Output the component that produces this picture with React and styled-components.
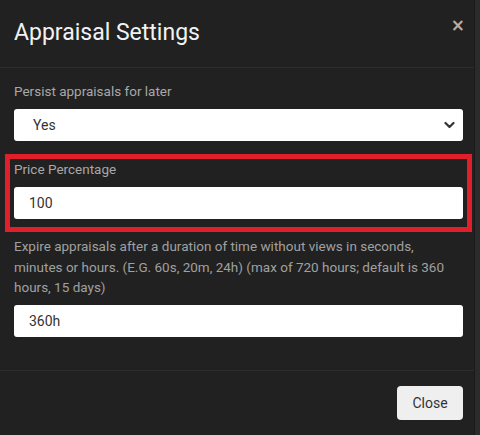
import React from "react";
import styled, { createGlobalStyle } from "styled-components";

const Global = createGlobalStyle`
  html, body { margin: 0; padding: 0; background: #262626; }
  body { font-family: Roboto, "Liberation Sans", sans-serif; }
`;

const Page = styled.div`
  display: flex;
  width: 480px;
  height: 435px;
  overflow: hidden;
`;

const Modal = styled.div`
  width: 474px;
  height: 435px;
  background: #212121;
  display: flex;
  flex-direction: column;
`;

const Strip = styled.div`
  flex: 1;
  background: #2b2b2b;
  border-left: 1px solid #1a1a1a;
`;

const Header = styled.div`
  display: flex;
  align-items: flex-start;
  justify-content: space-between;
  padding: 18px 14px 0 14px;
  height: 49px;
  border-bottom: 1px solid #2c2c2c;
`;

const Title = styled.h2`
  margin: 0;
  font-size: 23px;
  font-weight: 400;
  color: #f2f2f2;
  line-height: 30px;
`;

const CloseX = styled.button`
  background: none;
  border: none;
  padding: 0;
  margin: 0 -5px 0 0;
  color: #b0b0b0;
  font-size: 17px;
  font-weight: 700;
  line-height: 14px;
  cursor: pointer;
  font-family: "DejaVu Sans", sans-serif;
`;

const Body = styled.div`
  padding: 13px 11px 0 14px;
  height: 289px;
  border-bottom: 1px solid #2c2c2c;
  display: flex;
  flex-direction: column;
`;

const Label = styled.div`
  font-size: 13.5px;
  color: #a8a8a8;
  line-height: 20px;
  margin-bottom: ${(p) => p.$mb || 8}px;
`;

const Field = styled.div`
  height: 32px;
  background: #fff;
  border-radius: 3px;
  display: flex;
  align-items: center;
  justify-content: space-between;
  padding: 0 8px 0 ${(p) => p.$pl || 15}px;
  font-size: 14px;
  color: #333;
`;

const Highlight = styled.div`
  margin: 13px -9px 0 -9px;
  border: 5px solid #e11f2b;
  padding: 0 4px 8px 4px;
  display: flex;
  flex-direction: column;
`;

const Desc = styled.div`
  margin-top: 4px;
  font-size: 13.5px;
  line-height: 20.5px;
  color: #a0a0a0;
  margin-bottom: 7px;
`;

const Footer = styled.div`
  display: flex;
  justify-content: flex-end;
  padding: 15px 11px 0 0;
`;

const Button = styled.button`
  width: 66px;
  height: 34px;
  border: none;
  border-radius: 4px;
  background: #efefef;
  color: #333;
  font-family: Roboto, "Liberation Sans", sans-serif;
  font-size: 14px;
`;

const Chevron = () => (
  <svg width="11" height="8" viewBox="0 0 11 8">
    <path d="M1.5 2 L5.5 6 L9.5 2" fill="none" stroke="#333" strokeWidth="2.2" strokeLinecap="round" strokeLinejoin="round" />
  </svg>
);

export default function App() {
  return (
    <Page>
      <Global />
      <Modal>
        <Header>
          <Title>Appraisal Settings</Title>
          <CloseX>×</CloseX>
        </Header>
        <Body>
          <Label>Persist appraisals for later</Label>
          <Field $pl={19}>
            <span>Yes</span>
            <Chevron />
          </Field>
          <Highlight>
            <Label>Price Percentage</Label>
            <Field>100</Field>
          </Highlight>
          <Desc>
            Expire appraisals after a duration of time without views in seconds,
            minutes or hours. (E.G. 60s, 20m, 24h) (max of 720 hours; default is 360
            hours, 15 days)
          </Desc>
          <Field>360h</Field>
        </Body>
        <Footer>
          <Button>Close</Button>
        </Footer>
      </Modal>
      <Strip />
    </Page>
  );
}
